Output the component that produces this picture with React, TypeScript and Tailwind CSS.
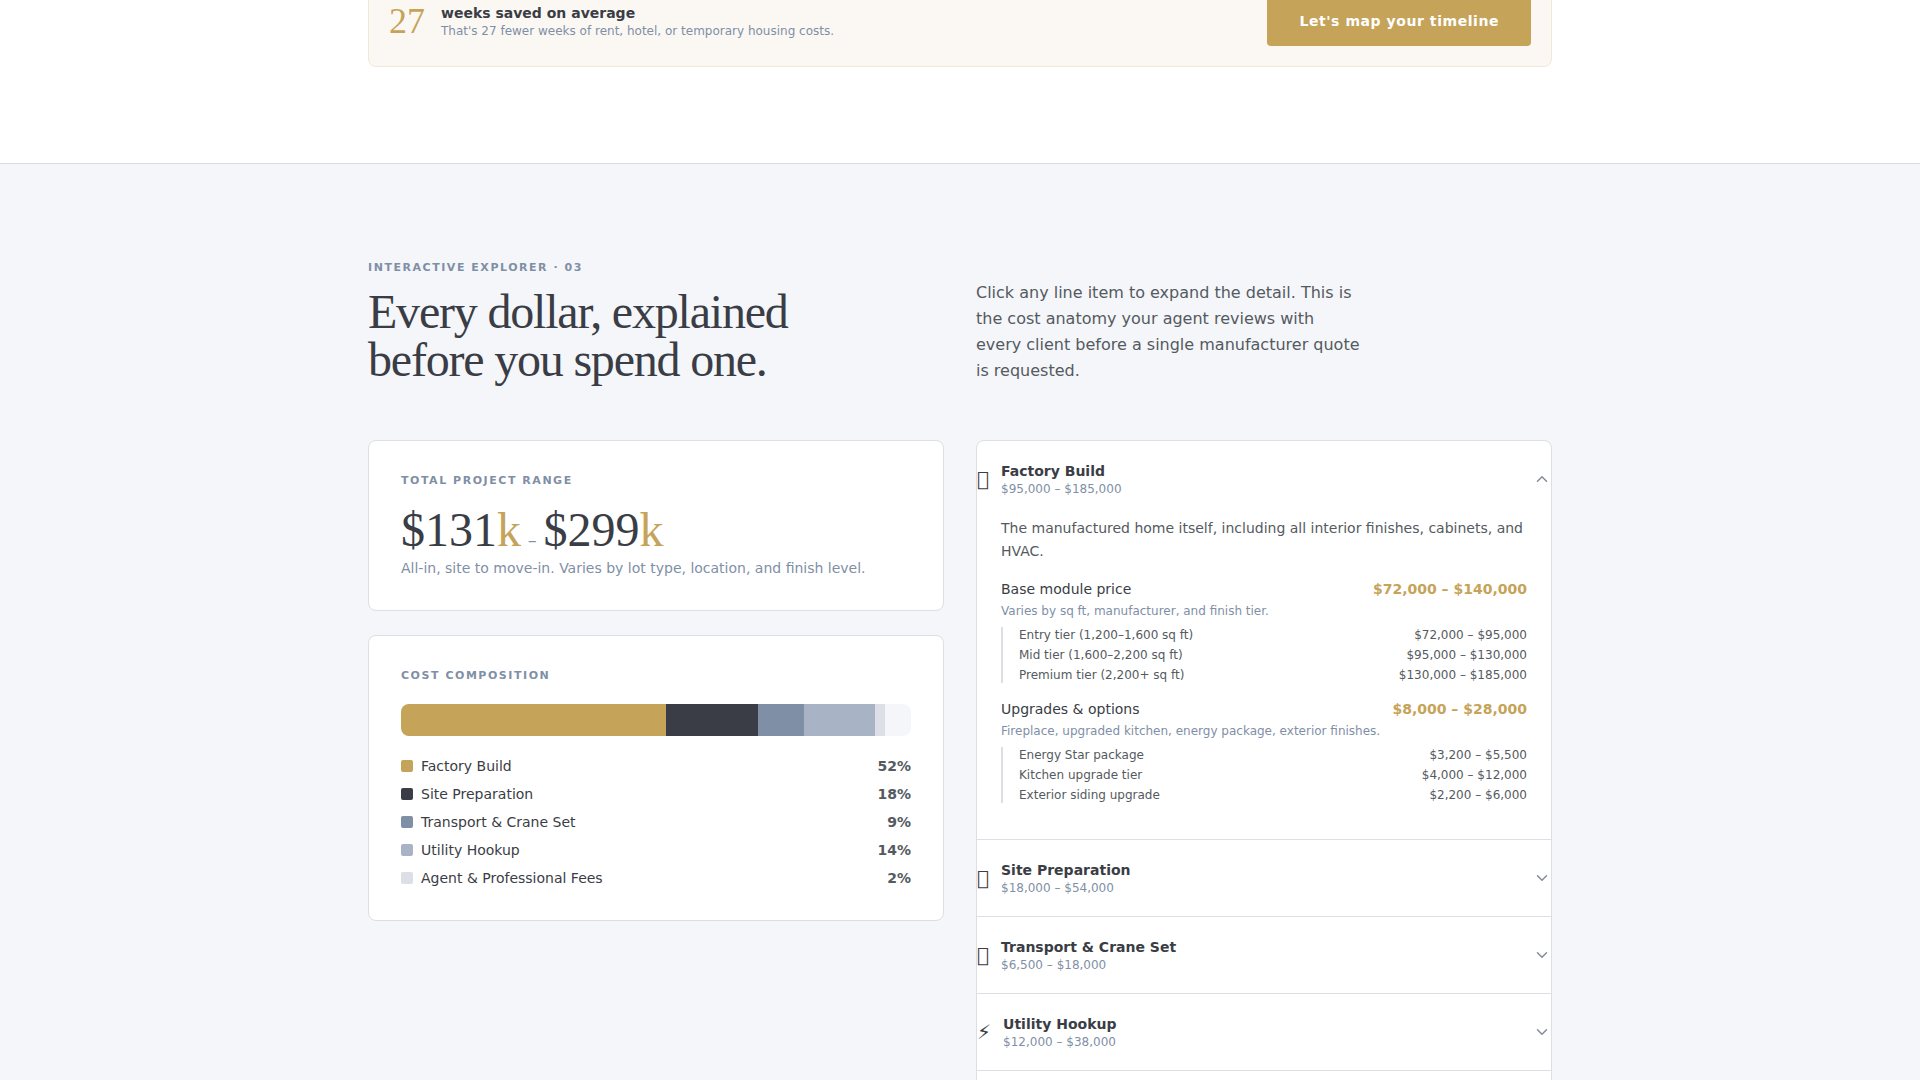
import { useState } from 'react';
import { ChevronDown, ChevronUp } from 'lucide-react';

interface LineItem {
  name: string;
  range: string;
  note: string;
  tiers: { label: string; range: string }[];
}

interface CostCategory {
  id: string;
  icon: string;
  name: string;
  range: string;
  share: number;
  color: string;
  description: string;
  items: LineItem[];
}

const categories: CostCategory[] = [
  {
    id: 'factory',
    icon: '\u{F0001}',
    name: 'Factory Build',
    range: '$95,000 – $185,000',
    share: 52,
    color: 'bg-[#c5a358]',
    description: 'The manufactured home itself, including all interior finishes, cabinets, and HVAC.',
    items: [
      {
        name: 'Base module price',
        range: '$72,000 – $140,000',
        note: 'Varies by sq ft, manufacturer, and finish tier.',
        tiers: [
          { label: 'Entry tier (1,200–1,600 sq ft)', range: '$72,000 – $95,000' },
          { label: 'Mid tier (1,600–2,200 sq ft)', range: '$95,000 – $130,000' },
          { label: 'Premium tier (2,200+ sq ft)', range: '$130,000 – $185,000' },
        ],
      },
      {
        name: 'Upgrades & options',
        range: '$8,000 – $28,000',
        note: 'Fireplace, upgraded kitchen, energy package, exterior finishes.',
        tiers: [
          { label: 'Energy Star package', range: '$3,200 – $5,500' },
          { label: 'Kitchen upgrade tier', range: '$4,000 – $12,000' },
          { label: 'Exterior siding upgrade', range: '$2,200 – $6,000' },
        ],
      },
    ],
  },
  {
    id: 'site',
    icon: '\u{F0002}',
    name: 'Site Preparation',
    range: '$18,000 – $54,000',
    share: 18,
    color: 'bg-[#3a3d45]',
    description: '',
    items: [],
  },
  {
    id: 'transport',
    icon: '\u{F0003}',
    name: 'Transport & Crane Set',
    range: '$6,500 – $18,000',
    share: 9,
    color: 'bg-[#7f8fa6]',
    description: '',
    items: [],
  },
  {
    id: 'utility',
    icon: '⚡',
    name: 'Utility Hookup',
    range: '$12,000 – $38,000',
    share: 14,
    color: 'bg-[#a8b4c6]',
    description: '',
    items: [],
  },
  {
    id: 'agent',
    icon: '\u{F0004}',
    name: 'Agent & Professional Fees',
    range: '$0 – $4,000',
    share: 2,
    color: 'bg-[#dddfe6]',
    description: '',
    items: [],
  },
];

function Label({ children }: { children: React.ReactNode }) {
  return <p className="text-[11px] leading-4 font-bold uppercase tracking-[0.14em] text-[#7f8fa6]">{children}</p>;
}

function SavingsBanner() {
  return (
    <div className="flex items-center justify-between rounded-lg border border-[#f0e9da] bg-[#fbf8f3] p-5">
      <div className="flex items-center gap-4">
        <span className="font-['Liberation_Serif',serif] text-4xl leading-9 text-[#c5a358]">27</span>
        <div>
          <p className="text-sm font-bold">weeks saved on average</p>
          <p className="text-xs text-[#7f8fa6]">That's 27 fewer weeks of rent, hotel, or temporary housing costs.</p>
        </div>
      </div>
      <button type="button" className="rounded bg-[#c5a358] px-8 py-[15px] text-sm font-bold tracking-[0.04em] text-white">
        Let's map your timeline
      </button>
    </div>
  );
}

function TotalCard() {
  return (
    <div className="rounded-lg border border-[#dcdfe3] bg-white p-8">
      <Label>Total project range</Label>
      <p className="mt-4 font-['Liberation_Serif',serif] text-5xl leading-[50px]">
        $131<span className="text-[#c5a358]">k</span>
        <span className="mx-px font-['DejaVu_Sans',sans-serif] text-lg leading-none text-[#7f8fa6]"> – </span>
        $299<span className="text-[#c5a358]">k</span>
      </p>
      <p className="mt-[3px] text-sm text-[#7f8fa6]">
        All-in, site to move-in. Varies by lot type, location, and finish level.
      </p>
    </div>
  );
}

function CompositionCard() {
  return (
    <div className="rounded-lg border border-[#dcdfe3] bg-white p-8">
      <Label>Cost composition</Label>
      <div className="mt-5 flex h-8 overflow-hidden rounded-lg bg-[#f4f6fa]">
        {categories.map((c) => (
          <div key={c.id} className={c.color} style={{ width: `${c.share}%` }} />
        ))}
      </div>
      <ul className="mt-5 space-y-2 text-sm">
        {categories.map((c) => (
          <li key={c.id} className="flex items-center gap-2">
            <span className={`size-3 rounded-xs ${c.color}`} />
            <span className="flex-1">{c.name}</span>
            <span className="font-bold text-[#555a60]">{c.share}%</span>
          </li>
        ))}
      </ul>
    </div>
  );
}

function CategoryRow({ category, open, onToggle }: { category: CostCategory; open: boolean; onToggle: () => void }) {
  const Chevron = open ? ChevronUp : ChevronDown;

  return (
    <div className="border-b border-[#dcdfe3] last:border-b-0">
      <button type="button" onClick={onToggle} aria-expanded={open} className="flex w-full items-center gap-3 py-5 text-left">
        <span className="text-xl leading-5">{category.icon}</span>
        <span className="flex-1">
          <span className="block text-sm font-bold">{category.name}</span>
          <span className="block text-xs text-[#7f8fa6]">{category.range}</span>
        </span>
        <Chevron size={18} className="text-[#858c98]" />
      </button>
      {open && (
        <div className="space-y-4 px-6 pb-9">
          <p className="text-sm leading-[23px] text-[#555a60]">{category.description}</p>
          {category.items.map((item) => (
            <div key={item.name}>
              <div className="flex justify-between text-sm">
                <span>{item.name}</span>
                <span className="font-bold text-[#c5a358]">{item.range}</span>
              </div>
              <p className="mt-1 text-xs text-[#7f8fa6]">{item.note}</p>
              <ul className="mt-2 space-y-1 border-l-2 border-[#dcdfe3] pl-4 text-xs text-[#555a60]">
                {item.tiers.map((tier) => (
                  <li key={tier.label} className="flex justify-between">
                    <span>{tier.label}</span>
                    <span>{tier.range}</span>
                  </li>
                ))}
              </ul>
            </div>
          ))}
        </div>
      )}
    </div>
  );
}

export default function App() {
  const [openId, setOpenId] = useState('factory');

  return (
    <main className="min-h-screen bg-white font-['DejaVu_Sans',sans-serif] text-[#3a3d45]">
      <section className="-mt-[25px] pb-24">
        <div className="mx-auto max-w-[1184px]">
          <SavingsBanner />
        </div>
      </section>

      <section className="border-t border-[#d5dae3] bg-[#f4f6fa] py-24">
        <div className="mx-auto max-w-[1184px]">
          <div className="grid grid-cols-2 items-end gap-8">
            <div>
              <Label>Interactive explorer · 03</Label>
              <h2 className="mt-3 font-['Liberation_Serif',serif] text-5xl leading-12 tracking-tight">
                Every dollar, explained
                <br />
                before you spend one.
              </h2>
            </div>
            <p className="max-w-96 text-base leading-[26px] text-[#555a60]">
              Click any line item to expand the detail. This is the cost anatomy your agent reviews with every client before a
              single manufacturer quote is requested.
            </p>
          </div>

          <div className="mt-14 grid grid-cols-2 items-start gap-8">
            <div className="space-y-6">
              <TotalCard />
              <CompositionCard />
            </div>
            <div className="overflow-hidden rounded-lg border border-[#dcdfe3] bg-white">
              {categories.map((c) => (
                <CategoryRow
                  key={c.id}
                  category={c}
                  open={openId === c.id}
                  onToggle={() => setOpenId(openId === c.id ? '' : c.id)}
                />
              ))}
            </div>
          </div>
        </div>
      </section>
    </main>
  );
}
